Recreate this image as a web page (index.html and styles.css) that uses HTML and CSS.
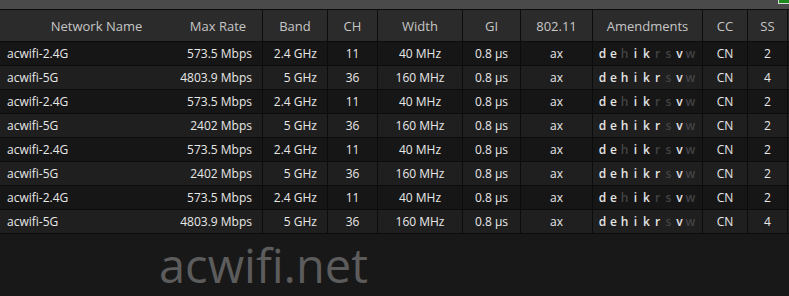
FILE: index.html
```html
<!DOCTYPE html>
<html>
<head>
<meta charset="utf-8">
<link rel="stylesheet" href="styles.css">
</head>
<body>
<div class="window">
  <div class="topbar"><span class="badge"></span></div>
  <div class="table">
    <div class="row head">
      <div class="c name">Network Name</div>
      <div class="c rate bl">Max Rate</div>
      <div class="c band bl">Band</div>
      <div class="c ch bl">CH</div>
      <div class="c wid bl">Width</div>
      <div class="c gi bl">GI</div>
      <div class="c std bl">802.11</div>
      <div class="c am bl">Amendments</div>
      <div class="c cc bl">CC</div>
      <div class="c ss bl">SS</div>
      <div class="c rest"></div>
    </div>

    <div class="row odd">
      <div class="c name">acwifi-2.4G</div>
      <div class="c rate bl">573.5 Mbps</div>
      <div class="c band bl">2.4 GHz</div>
      <div class="c ch bl">11</div>
      <div class="c wid bl">40 MHz</div>
      <div class="c gi bl">0.8 µs</div>
      <div class="c std bl">ax</div>
      <div class="c am bl"><span>d</span><span>e</span><span class="off">h</span><span>i</span><span>k</span><span class="off">r</span><span class="off">s</span><span>v</span><span class="off">w</span></div>
      <div class="c cc bl">CN</div>
      <div class="c ss bl">2</div>
      <div class="c rest"></div>
    </div>

    <div class="row even">
      <div class="c name">acwifi-5G</div>
      <div class="c rate bl">4803.9 Mbps</div>
      <div class="c band bl">5 GHz</div>
      <div class="c ch bl">36</div>
      <div class="c wid bl">160 MHz</div>
      <div class="c gi bl">0.8 µs</div>
      <div class="c std bl">ax</div>
      <div class="c am bl"><span>d</span><span>e</span><span>h</span><span>i</span><span>k</span><span>r</span><span class="off">s</span><span>v</span><span class="off">w</span></div>
      <div class="c cc bl">CN</div>
      <div class="c ss bl">4</div>
      <div class="c rest"></div>
    </div>

    <div class="row odd">
      <div class="c name">acwifi-2.4G</div>
      <div class="c rate bl">573.5 Mbps</div>
      <div class="c band bl">2.4 GHz</div>
      <div class="c ch bl">11</div>
      <div class="c wid bl">40 MHz</div>
      <div class="c gi bl">0.8 µs</div>
      <div class="c std bl">ax</div>
      <div class="c am bl"><span>d</span><span>e</span><span class="off">h</span><span>i</span><span>k</span><span class="off">r</span><span class="off">s</span><span>v</span><span class="off">w</span></div>
      <div class="c cc bl">CN</div>
      <div class="c ss bl">2</div>
      <div class="c rest"></div>
    </div>

    <div class="row even">
      <div class="c name">acwifi-5G</div>
      <div class="c rate bl">2402 Mbps</div>
      <div class="c band bl">5 GHz</div>
      <div class="c ch bl">36</div>
      <div class="c wid bl">160 MHz</div>
      <div class="c gi bl">0.8 µs</div>
      <div class="c std bl">ax</div>
      <div class="c am bl"><span>d</span><span>e</span><span>h</span><span>i</span><span>k</span><span>r</span><span class="off">s</span><span>v</span><span class="off">w</span></div>
      <div class="c cc bl">CN</div>
      <div class="c ss bl">2</div>
      <div class="c rest"></div>
    </div>

    <div class="row odd">
      <div class="c name">acwifi-2.4G</div>
      <div class="c rate bl">573.5 Mbps</div>
      <div class="c band bl">2.4 GHz</div>
      <div class="c ch bl">11</div>
      <div class="c wid bl">40 MHz</div>
      <div class="c gi bl">0.8 µs</div>
      <div class="c std bl">ax</div>
      <div class="c am bl"><span>d</span><span>e</span><span class="off">h</span><span>i</span><span>k</span><span class="off">r</span><span class="off">s</span><span>v</span><span class="off">w</span></div>
      <div class="c cc bl">CN</div>
      <div class="c ss bl">2</div>
      <div class="c rest"></div>
    </div>

    <div class="row even">
      <div class="c name">acwifi-5G</div>
      <div class="c rate bl">2402 Mbps</div>
      <div class="c band bl">5 GHz</div>
      <div class="c ch bl">36</div>
      <div class="c wid bl">160 MHz</div>
      <div class="c gi bl">0.8 µs</div>
      <div class="c std bl">ax</div>
      <div class="c am bl"><span>d</span><span>e</span><span>h</span><span>i</span><span>k</span><span>r</span><span class="off">s</span><span>v</span><span class="off">w</span></div>
      <div class="c cc bl">CN</div>
      <div class="c ss bl">2</div>
      <div class="c rest"></div>
    </div>

    <div class="row odd">
      <div class="c name">acwifi-2.4G</div>
      <div class="c rate bl">573.5 Mbps</div>
      <div class="c band bl">2.4 GHz</div>
      <div class="c ch bl">11</div>
      <div class="c wid bl">40 MHz</div>
      <div class="c gi bl">0.8 µs</div>
      <div class="c std bl">ax</div>
      <div class="c am bl"><span>d</span><span>e</span><span class="off">h</span><span>i</span><span>k</span><span class="off">r</span><span class="off">s</span><span>v</span><span class="off">w</span></div>
      <div class="c cc bl">CN</div>
      <div class="c ss bl">2</div>
      <div class="c rest"></div>
    </div>

    <div class="row even">
      <div class="c name">acwifi-5G</div>
      <div class="c rate bl">4803.9 Mbps</div>
      <div class="c band bl">5 GHz</div>
      <div class="c ch bl">36</div>
      <div class="c wid bl">160 MHz</div>
      <div class="c gi bl">0.8 µs</div>
      <div class="c std bl">ax</div>
      <div class="c am bl"><span>d</span><span>e</span><span>h</span><span>i</span><span>k</span><span>r</span><span class="off">s</span><span>v</span><span class="off">w</span></div>
      <div class="c cc bl">CN</div>
      <div class="c ss bl">4</div>
      <div class="c rest"></div>
    </div>
  </div>
  <div class="watermark">acwifi.net</div>
</div>
</body>
</html>
```

FILE: styles.css
```css
html, body {
  margin: 0;
  padding: 0;
  background: #181818;
}
.window {
  width: 789px;
  height: 296px;
  overflow: hidden;
  background: #181818;
  font-family: "Open Sans", "DejaVu Sans", sans-serif;
  color: #e8e8e8;
}
.topbar {
  position: relative;
  height: 9px;
  background: #4a4a4a;
  border-bottom: 1px solid #0c0c0c;
}
.badge {
  position: absolute;
  top: 0;
  right: 0;
  width: 10px;
  height: 3px;
  background: #1d8a1d;
  border-left: 1px solid #d8d8d8;
  border-bottom: 1px solid #d8d8d8;
}
.table {
  width: 820px;
}
.row {
  display: grid;
  grid-template-columns: 174px 89px 65px 50px 85px 58px 72px 110px 45px 40px 1fr;
  height: 23px;
  border-bottom: 1px solid #0c0c0c;
  font-size: 12px;
}
.row.head {
  height: 31px;
  background: #2b2b2b;
  color: #c6c6c6;
  font-size: 13px;
}
.row.odd { background: #161616; }
.row.even { background: #1f1f1f; }
.c {
  display: flex;
  align-items: center;
  justify-content: center;
  white-space: nowrap;
  overflow: hidden;
}
.bl { border-right: 1px solid #0c0c0c; }
.row .name { justify-content: flex-start; padding-left: 7px; }
.row .rate, .row .band { justify-content: flex-end; padding-right: 10px; }
.row.head .name { justify-content: center; padding-left: 19px; }
.row.head .rate, .row.head .band { justify-content: center; padding-right: 0; }
.row .am { justify-content: flex-start; padding-left: 4px; }
.row.head .am { justify-content: center; padding-left: 0; }
.am span {
  display: inline-block;
  width: 11px;
  text-align: center;
  font-weight: 600;
  font-size: 12px;
  color: #e4e4e4;
}
.am span.off { color: #434343; }
.watermark {
  padding: 3px 0 0 159px;
  font-size: 47px;
  line-height: 56px;
  color: #5c5c5c;
  font-family: "Open Sans", "DejaVu Sans", sans-serif;
}
```
